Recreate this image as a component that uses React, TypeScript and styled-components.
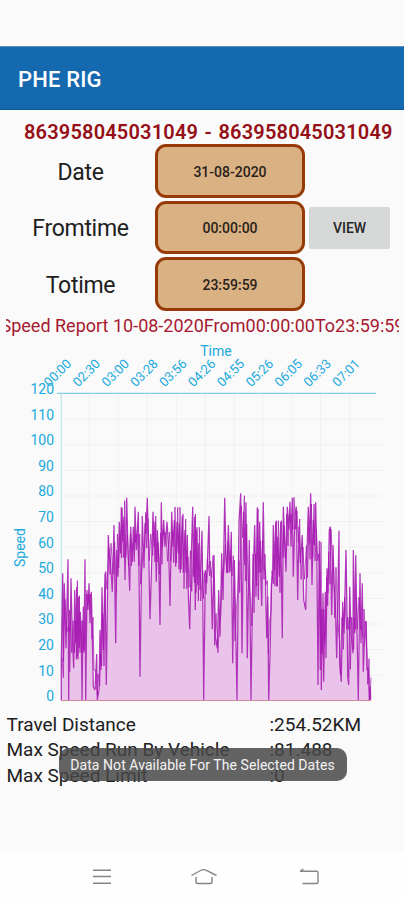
import React from 'react';
import styled, { createGlobalStyle } from 'styled-components';

const GlobalStyle = createGlobalStyle`
  * { box-sizing: border-box; }
  body { margin: 0; background: #fafafa; font-family: Roboto, sans-serif; color: #202020; }
  button { font-family: inherit; }
`;

const Screen = styled.div`
  position: relative;
  width: 404px;
  height: 900px;
  overflow: hidden;
  display: flex;
  flex-direction: column;
  background: #fafafa;
`;

const StatusBar = styled.div`
  height: 46px;
  flex: none;
`;

const AppBar = styled.header`
  height: 64px;
  flex: none;
  display: flex;
  align-items: center;
  padding: 2px 0 0 18px;
  background: #156aaf;
  border-top: 1px solid #5b8fbd;
  border-bottom: 1px solid #0f5a9a;
  color: #fff;
  font-size: 22px;
  font-weight: 500;
  letter-spacing: 0.15px;
`;

const VehicleId = styled.div`
  height: 34px;
  flex: none;
  padding: 9px 0 0 24px;
  color: #950f16;
  font-size: 20px;
  line-height: 26px;
  font-weight: 600;
  letter-spacing: 0.18px;
  word-spacing: 1.3px;
  white-space: nowrap;
`;

const Form = styled.section`
  flex: none;
  display: grid;
  grid-template-columns: 155px 150px 81px;
  grid-template-rows: repeat(3, 53.5px);
  row-gap: 3px;
  align-items: stretch;
`;

const Label = styled.label`
  display: flex;
  align-items: center;
  justify-content: center;
  padding: 3px 0 0 6px;
  font-size: 23px;
  letter-spacing: -0.3px;
`;

const Field = styled.button`
  border: 3px solid #973a08;
  border-radius: 11px;
  background: #d9b183;
  color: #29211a;
  font-size: 14px;
  font-weight: 500;
  padding: 2px 0 0;
  letter-spacing: 0;
`;

const ViewButton = styled.button`
  align-self: center;
  grid-column: 3;
  grid-row: 2;
  margin: 2px 0 0 4px;
  height: 42px;
  width: 81px;
  border: 0;
  border-radius: 2px;
  background: #d6d8d7;
  color: #262626;
  font-size: 14px;
  font-weight: 500;
`;

const ReportTitle = styled.div`
  flex: none;
  height: 29px;
  margin: 0 5px 0 6px;
  overflow: hidden;
  display: flex;
  justify-content: center;
  color: #a71930;
  font-size: 18px;
  line-height: 30px;
  white-space: nowrap;
`;

const Chart = styled.svg`
  display: block;
  flex: none;
  width: 404px;
  height: 372px;
  font-family: Roboto, sans-serif;
  font-size: 14px;
  fill: #20a9dc;
`;

const Stats = styled.dl`
  flex: none;
  margin: 0;
  padding: 0 0 0 6.5px;
  display: grid;
  grid-template-columns: 263px 1fr;
  grid-auto-rows: 25.5px;
  align-items: center;
  font-size: 19px;
  white-space: nowrap;
`;

const StatName = styled.dt``;
const StatValue = styled.dd`
  margin: 0;
`;

const Toast = styled.div`
  position: absolute;
  left: 58.5px;
  top: 748px;
  width: 288px;
  height: 33px;
  border-radius: 10px;
  background: rgba(72, 72, 72, 0.85);
  color: #f3f3f3;
  display: flex;
  align-items: center;
  justify-content: center;
  padding-top: 1px;
  font-size: 14px;
  letter-spacing: 0.06px;
  white-space: nowrap;
`;

const NavBar = styled.nav`
  margin-top: auto;
  flex: none;
  height: 47px;
  display: flex;
  justify-content: space-between;
  align-items: flex-start;
  padding: 12px 80px 0 91px;
  background: #fefefe;
`;

const NavIcon = styled.svg`
  width: 28px;
  height: 24px;
  fill: none;
  stroke: #858585;
  stroke-width: 1.4;
  overflow: visible;
`;

// Line samples as x,y pairs in thirds of a pixel, from the chart's left edge and from 130px below its top.
const samples: number[][] = [
  [184,690,184,575,188,310,190,575,193,340,198,535,204,268,206,690,208,420,209,605,213,325,217,500,221,595,224,360,227,520,230,352,232,560,236,380,238,535,241,425,244,500,246,690,250,410,252,540,255,268,257,690,261,360,264,420,267,340,270,460,274,365,277,490,280,650,285,660,290,552,292,690,297,660,300,480,303,600,306,352,310,540,315,310,319,645,325,195,328,260,331,265,337,365,342,165,347,520,350,240,354,320,358,155,362,250,364,112,368,215,372,140,375,330,380,83,384,240,389,362,392,170,397,275,400,170,403,275,405,110,409,240,415,125,417,300],
  [420,620,427,138,432,295,435,160,438,190,442,83,446,240,450,448,456,240,459,125,463,230,465,155,469,335,472,180,476,265,480,465,484,97,487,235,491,150,495,230,501,155,506,235,510,408,515,125,519,230,523,150,527,290,531,155,535,250,538,160,541,308,547,138,550,308,555,180,558,308,562,195,565,370,569,478,573,290,578,110,581,320,584,140,586,420,589,180,593,345,596,220,600,360,606,182,608,350,611,690,616,300,620,340,627,138,629,290,633,305,637,478,642,255,646,500,652,535,656,360,660,500,665,250,669,390,674,83,678,260,682,310,685,165,690,305,694,185,698,580,703,270,707,465,711,690,715,320,717,155,722,70,726,550,731,125,734,285,738,97,742,565,748,210,753,690,757,420,760,300],
  [764,165,768,380,772,112,775,390,779,155,781,260,785,408,790,97,793,300,796,300,800,505,803,380,806,690,811,520,814,350,818,310,820,165,823,300,827,155,830,350,833,200,838,320,842,155,847,505,850,110,854,215,858,305,862,110,866,180,870,95,873,230,877,83,880,320,885,130,889,110,893,390,897,170,901,280,907,195,911,390,917,420,920,275,925,110,928,220,932,70,936,345,940,150,943,225,947,97,951,300,954,645,958,212,961,600,963,215,964,660,969,370,971,635,976,365,978,565,981,295,984,370,988,180,991,170,995,435,999,225,1002,340,1006,395,1010,565,1017,182,1019,580,1024,635,1028,395,1032,490,1038,240,1041,430,1043,620,1046,645,1049,350,1053,490,1059,550,1060,240,1064,490,1067,255,1070,430,1075,690,1080,310,1083,520,1087,340,1090,605,1095,455,1099,455,1101,600,1105,595,1108,690,1111,650,1112,688],
];
const flat = samples.flat();
const points: [number, number][] = [];
for (let i = 0; i < flat.length; i += 2) points.push([flat[i] / 3, 130 + flat[i + 1] / 3]);
const toPath = (list: [number, number][]) => list.map(([x, y]) => `${x.toFixed(1)},${y.toFixed(1)}`).join(' ');
const line = toPath(points);

// Short swings between neighbouring readings, which thicken the middle of the trace.
const swings: [number, number][] = points.slice(1, -1).map(([x], i) => {
  const near = points.slice(Math.max(0, i - 1), i + 4).map((p) => p[1]).sort((a, b) => a - b);
  const middle = near[Math.floor((near.length - 1) / 2)];
  const reach = Math.min(20, (near[near.length - 2] - near[1]) / 2 + 5);
  return [x + 0.7, Math.min(360, middle + (i % 2 ? reach * 0.8 : -reach * 0.8))];
});

const times = ['00:00', '02:30', '03:00', '03:28', '03:56', '04:26', '04:55', '05:26', '06:05', '06:33', '07:01'];
const speeds = [120, 110, 100, 90, 80, 70, 60, 50, 40, 30, 20, 10, 0];

const details = [
  ['Travel Distance', ':254.52KM'],
  ['Max Speed Run By Vehicle', ':81.488'],
  ['Max Speed Limit', ':0'],
];

function SpeedChart() {
  return (
    <Chart viewBox="0 0 404 372">
      <g stroke="#f0f0f0" strokeWidth="1">
        {times.slice(1).map((t, i) => <path key={t} d={`M${89.5 + i * 28.9} 52V360`} />)}
        {speeds.slice(1, -1).map((s, i) => <path key={s} d={`M61 ${79.2 + i * 25.6}H383`} />)}
      </g>
      <path d="M61.3 53V361" stroke="#b5e4e6" />
      <path d="M57 53.3H376" stroke="#85cdea" strokeWidth="1.3" />
      <polygon points={`61.3,360.3 ${line} 371,360.3`} fill="#e9c3e9" />
      <polyline points={toPath(swings)} fill="none" stroke="#a514b0" strokeWidth="1" strokeOpacity="0.7" strokeLinejoin="bevel" />
      <polyline points={line} fill="none" stroke="#a514b0" strokeWidth="1.25" strokeOpacity="0.85" strokeLinejoin="bevel" />
      <path d="M61 360.5H371" stroke="#d58a9c" strokeWidth="1.2" />
      <text x="216" y="16" textAnchor="middle">Time</text>
      {times.map((t, i) => (
        <text key={t} fontSize="13" transform={`translate(${49.3 + i * 28.85} 47.5) rotate(-45)`}>{t}</text>
      ))}
      {speeds.map((s, i) => <text key={s} x="54" y={54 + i * 25.6} textAnchor="end">{s}</text>)}
      <text transform="translate(25 227) rotate(-90)">Speed</text>
    </Chart>
  );
}

export default function App() {
  return (
    <Screen>
      <GlobalStyle />
      <StatusBar />
      <AppBar>PHE RIG</AppBar>
      <VehicleId>863958045031049 - 863958045031049</VehicleId>
      <Form>
        <Label>Date</Label>
        <Field>31-08-2020</Field>
        <span />
        <Label>Fromtime</Label>
        <Field>00:00:00</Field>
        <ViewButton>VIEW</ViewButton>
        <Label>Totime</Label>
        <Field>23:59:59</Field>
      </Form>
      <ReportTitle>Speed Report 10-08-2020From00:00:00To23:59:59</ReportTitle>
      <SpeedChart />
      <Stats>
        {details.map(([name, value]) => (
          <React.Fragment key={name}>
            <StatName>{name}</StatName>
            <StatValue>{value}</StatValue>
          </React.Fragment>
        ))}
      </Stats>
      <Toast>Data Not Available For The Selected Dates</Toast>
      <NavBar>
        <NavIcon viewBox="0 0 28 24"><path d="M2 5.3H20M2 11.5H20M2 18.3H20" /></NavIcon>
        <NavIcon viewBox="0 0 28 24"><path d="M-2.5 10.5L6.5 5.5Q9.5 3.8 12.5 5.5L22.5 10.5M2 12V17Q2 18.5 3.5 18.5H16.5Q18 18.5 18 17V12" /></NavIcon>
        <NavIcon viewBox="0 0 28 24"><path d="M4 6.3H20.5Q22 6.3 22 8V16.5Q22 18.5 20.5 18.5H6.5M4 6.3L7.5 4" /></NavIcon>
      </NavBar>
    </Screen>
  );
}
